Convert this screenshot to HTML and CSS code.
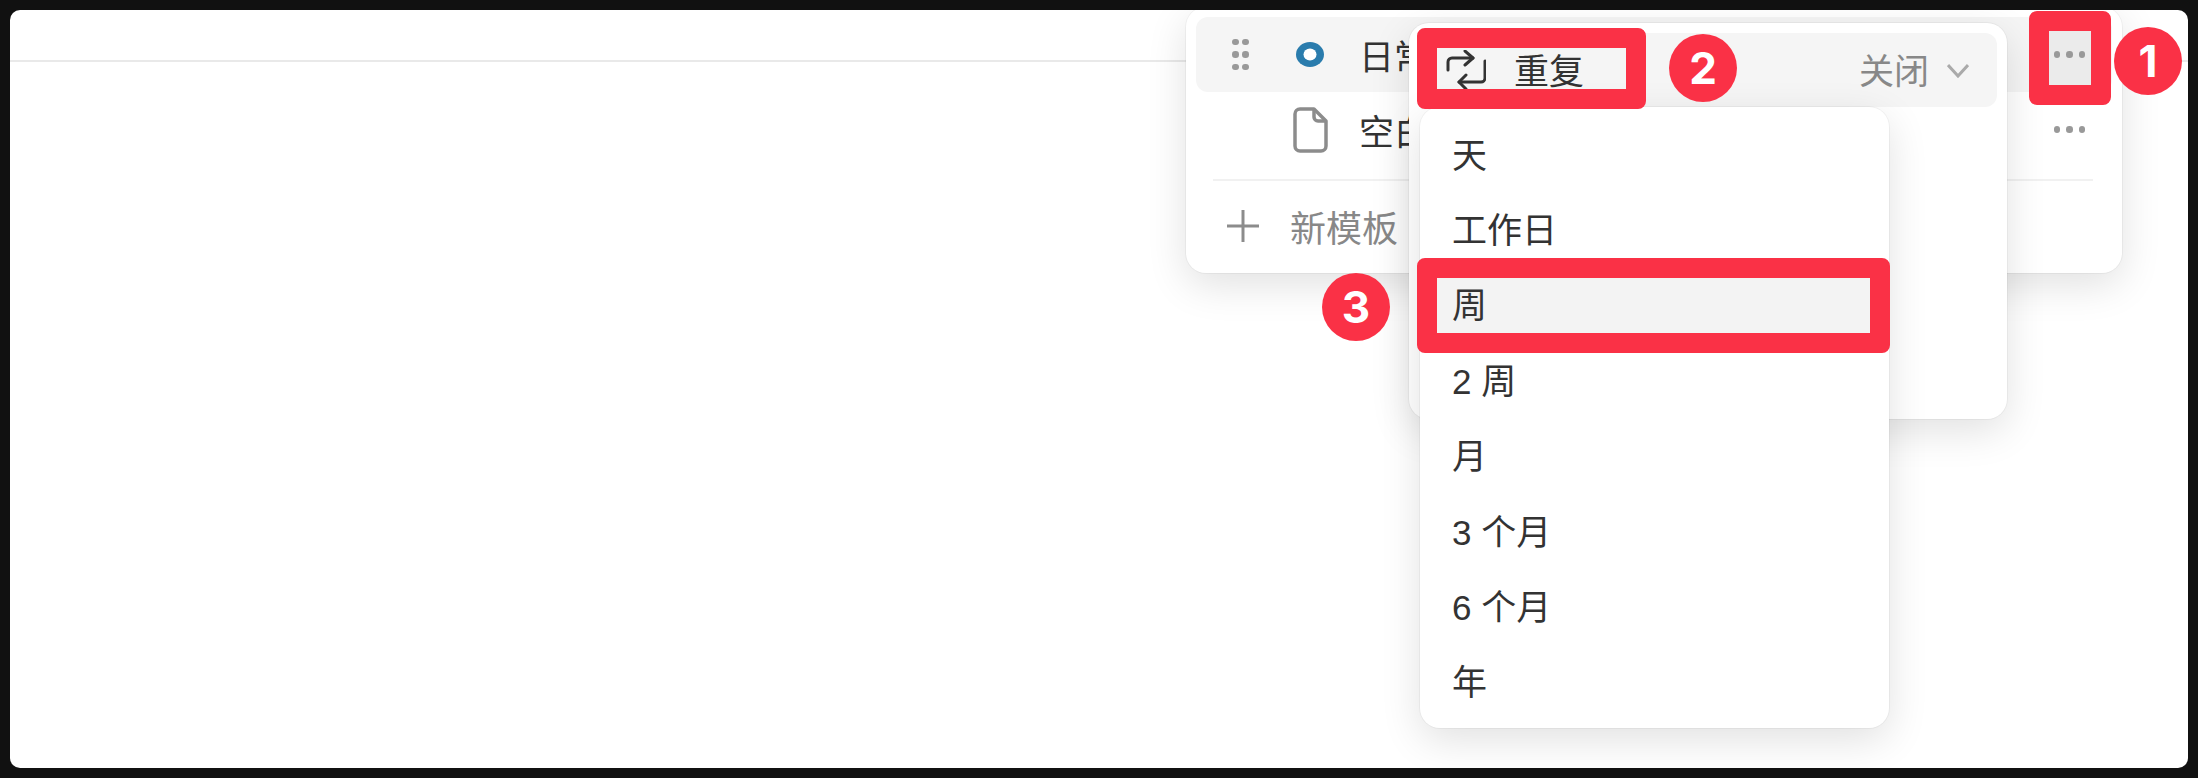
FILE: index.html
```html
<!DOCTYPE html>
<html lang="zh-CN">
<head>
    <meta charset="UTF-8">
    <meta name="viewport" content="width=device-width, initial-scale=1.0">
    <title>重复模板</title>
    <link rel="stylesheet" href="styles.css">
</head>
<body>
    <div class="window">
        <div class="topbar"></div>

        <!-- Template list -->
        <div class="panel templates">
            <div class="row row-active">
                <div class="handle"><i></i><i></i><i></i><i></i><i></i><i></i></div>
                <div class="row-icon">
                    <svg width="28" height="25" viewBox="0 0 28 25"><ellipse cx="14" cy="12.5" rx="14" ry="12.5" fill="#2a7cad"/><ellipse cx="14" cy="12.5" rx="6.5" ry="6" fill="#fff"/></svg>
                </div>
                <span class="row-name">日常</span>
                <div class="more more-active"><i></i><i></i><i></i></div>
            </div>
            <div class="row">
                <div class="handle handle-empty"></div>
                <div class="row-icon">
                    <svg width="35" height="46" viewBox="0 0 35 46" fill="none" stroke="#8c8c8c" stroke-width="3.5" stroke-linejoin="round"><path d="M7 2H21L33 14V39a5 5 0 0 1-5 5H7a5 5 0 0 1-5-5V7a5 5 0 0 1 5-5Z"/><path d="M21 2V10a4 4 0 0 0 4 4H33"/></svg>
                </div>
                <span class="row-name">空白</span>
                <div class="more"><i></i><i></i><i></i></div>
            </div>
            <div class="divider"></div>
            <div class="row row-new">
                <svg width="32" height="32" viewBox="0 0 32 32" stroke="#8c8c8c" stroke-width="3"><path d="M16 0V32M0 16H32"/></svg>
                <span class="new-label">新模板</span>
            </div>
        </div>

        <!-- Repeat setting -->
        <div class="panel repeat">
            <div class="row repeat-row">
                <svg width="40" height="40" viewBox="0 0 40 40" fill="none" stroke="#333" stroke-width="3" stroke-linecap="round" stroke-linejoin="round"><path d="M2 20V12a4 4 0 0 1 4-4H27"/><path d="M19 1L27 8L19 15"/><path d="M39 11V28a4 4 0 0 1-4 4H13"/><path d="M20 25L13 32L20 39"/></svg>
                <span class="repeat-label">重复</span>
                <span class="repeat-value">关闭</span>
                <svg width="22" height="15" viewBox="0 0 22 15" fill="none" stroke="#aaa" stroke-width="3"><path d="M1 2L11 13L21 2"/></svg>
            </div>
        </div>

        <!-- Frequency menu -->
        <div class="panel menu">
            <div class="menu-item">天</div>
            <div class="menu-item">工作日</div>
            <div class="menu-item menu-item-active">周</div>
            <div class="menu-item">2 周</div>
            <div class="menu-item">月</div>
            <div class="menu-item">3 个月</div>
            <div class="menu-item">6 个月</div>
            <div class="menu-item">年</div>
        </div>

        <!-- Annotations -->
        <div class="mark mark-more"></div>
        <div class="mark mark-repeat"></div>
        <div class="mark mark-week"></div>
        <div class="step step-1">1</div>
        <div class="step step-2">2</div>
        <div class="step step-3">3</div>
    </div>
</body>
</html>
```

FILE: styles.css
```css
* {
    box-sizing: border-box;
}

body {
    margin: 0;
    height: 778px;
    padding: 10px;
    overflow: hidden;
    display: flex;
    background: #111;
    font-family: "Liberation Sans", "Noto Sans CJK SC", sans-serif;
    color: #333;
}

.window {
    flex: 1;
    position: relative;
    overflow: hidden;
    border-radius: 10px;
    background: #fff;
}

.topbar {
    height: 52px;
    border-bottom: 2px solid #e9e9e9;
}

.panel {
    position: absolute;
    background: #fff;
    border-radius: 20px;
    box-shadow: 0 0 0 1px rgba(0, 0, 0, 0.04), 0 12px 40px rgba(0, 0, 0, 0.12);
}

/* Template list */
.templates {
    left: 1176px;
    top: -3px;
    width: 936px;
    height: 266px;
    padding: 10px;
}

.row {
    display: flex;
    align-items: center;
    height: 75px;
    padding-left: 36px;
    padding-right: 17px;
    border-radius: 12px;
    font-size: 35px;
}

.row-active {
    background: #f5f5f5;
}

.handle {
    width: 17px;
    margin-right: 41px;
    display: grid;
    grid-template-columns: 6.5px 6.5px;
    column-gap: 3.5px;
    row-gap: 6px;
}

.handle i,
.more i {
    width: 6.5px;
    height: 6.5px;
    border-radius: 50%;
    background: #999;
}

.row-icon {
    width: 40px;
    margin-right: 29px;
    display: flex;
    justify-content: center;
}

.more {
    margin-left: auto;
    height: 64px;
    padding: 0 10px;
    display: flex;
    align-items: center;
    gap: 6px;
    border-radius: 8px;
}

.more-active {
    background: #ebebeb;
}

.divider {
    height: 2px;
    margin: 12px 19px 8px 17px;
    background: #f1f1f1;
}

.row-new {
    padding-left: 31px;
    padding-bottom: 2px;
    gap: 31px;
}

.new-label {
    font-size: 36px;
    color: #888;
}

/* Repeat setting */
.repeat {
    left: 1399px;
    top: 13px;
    width: 598px;
    height: 396px;
    padding: 10px;
}

.repeat-row {
    height: 74px;
    padding-left: 27px;
    padding-right: 28px;
    background: #f5f5f5;
}

.repeat-label {
    margin-left: 28px;
    margin-bottom: 4px;
}

.repeat-value {
    margin-left: auto;
    margin-right: 18px;
    margin-bottom: 4px;
    color: #888;
}

/* Frequency menu */
.menu {
    left: 1410px;
    top: 97px;
    width: 469px;
    height: 621px;
    padding: 9px 10px;
}

.menu-item {
    display: flex;
    align-items: center;
    height: 75.4px;
    padding-left: 22px;
    padding-bottom: 3px;
    border-radius: 8px;
    font-size: 35px;
    white-space: pre;
}

.menu-item-active {
    background: #f3f3f3;
}

/* Annotations */
.mark {
    position: absolute;
    border: 20px solid #fa3146;
    border-radius: 8px;
}

.mark-more {
    left: 2019px;
    top: 1px;
    width: 82px;
    height: 94px;
}

.mark-repeat {
    left: 1407px;
    top: 18px;
    width: 229px;
    height: 81px;
}

.mark-week {
    left: 1407px;
    top: 248px;
    width: 473px;
    height: 95px;
}

.step {
    position: absolute;
    width: 68px;
    height: 68px;
    display: flex;
    align-items: center;
    justify-content: center;
    border-radius: 50%;
    background: #fa3146;
    color: #fff;
    font-family: Inter, "Liberation Sans", sans-serif;
    font-size: 44px;
    font-weight: 700;
}

.step-1 {
    left: 2104px;
    top: 17px;
}

.step-2 {
    left: 1659px;
    top: 24px;
}

.step-3 {
    left: 1312px;
    top: 263px;
}
```
